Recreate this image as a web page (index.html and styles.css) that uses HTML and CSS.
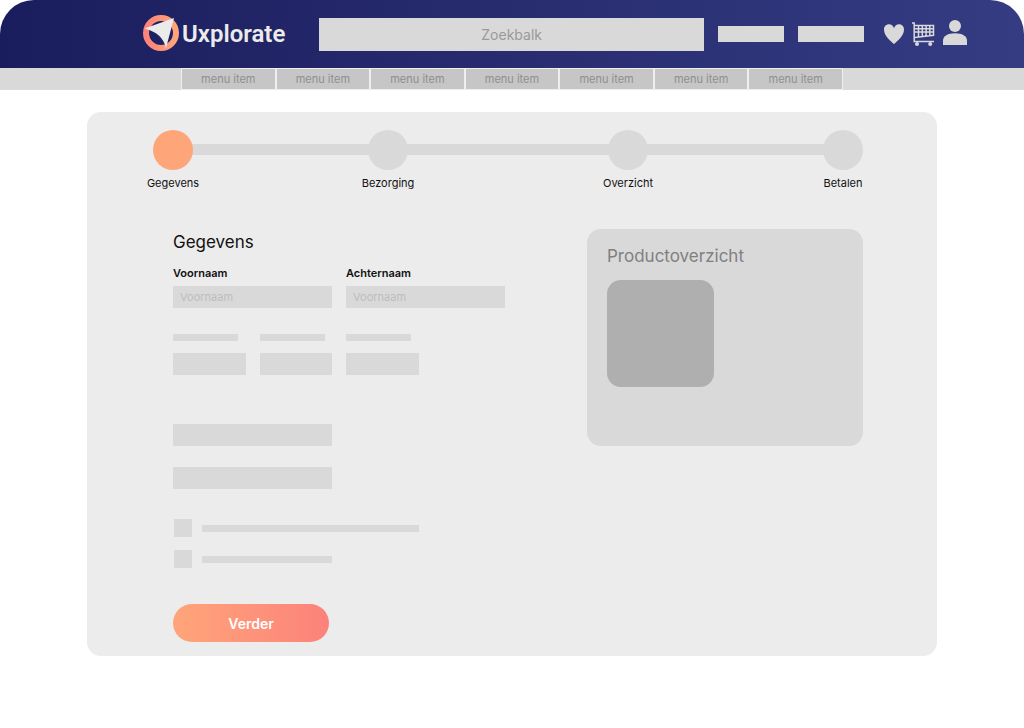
FILE: index.html
```
<!DOCTYPE html>
<html lang="nl">
<head>
    <meta charset="UTF-8">
    <meta name="viewport" content="width=device-width, initial-scale=1.0">
    <title>Uxplorate - Gegevens</title>
    <link rel="stylesheet" href="styles.css">
</head>
<body>
    <header class="header">
        <a href="#" class="logo">
            <svg class="logo-mark" viewBox="0 0 38 38" aria-hidden="true">
                <defs>
                    <linearGradient id="ring" x1="0" y1="0" x2="1" y2="0">
                        <stop offset="0" stop-color="#fd8379"/>
                        <stop offset="1" stop-color="#ffa57a"/>
                    </linearGradient>
                </defs>
                <circle cx="19" cy="18" r="15" fill="none" stroke="url(#ring)" stroke-width="6"/>
                <path d="M2.500 13.500L32 3L24 33Q20.500 18 2.500 13.500Z" fill="#ebebeb"/>
            </svg>
            <span class="logo-text">Uxplorate</span>
        </a>
        <input class="search" type="text" placeholder="Zoekbalk" aria-label="Zoekbalk">
        <nav class="header-links">
            <a href="#" aria-label="Link 1"></a>
            <a href="#" aria-label="Link 2"></a>
        </nav>
        <div class="header-icons">
            <a href="#" aria-label="Favorieten">
                <svg class="icon-heart" viewBox="0 0 20 20"><path d="M10 20C7 17.500 0 12 0 5.500C0 2.500 2.200 .3 5 .3C7.300 .3 9.200 1.800 10 4.200C10.800 1.800 12.700 .3 15 .3C17.800 .3 20 2.500 20 5.500C20 12 13 17.500 10 20Z"/></svg>
            </a>
            <a href="#" aria-label="Winkelwagen">
                <svg class="icon-cart" viewBox="0 0 23 24">
                    <path d="M0 1H2.200V19.500H22M2.200 3.500H21.500V13.300L2.500 15.500M2.200 6.700H21.500M2.200 10H21.500M6.500 3.500V15M10.300 3.500V14.500M14.100 3.500V14.200M17.800 3.500V13.800" fill="none" stroke="#d9d9d9" stroke-width="1.500"/>
                    <circle cx="5" cy="21.900" r="2"/>
                    <circle cx="18.200" cy="21.900" r="2"/>
                </svg>
            </a>
            <a href="#" aria-label="Account">
                <svg class="icon-user" viewBox="0 0 24 28"><circle cx="12" cy="6" r="6"/><path d="M0 25V20.500C0 16 5 13.200 12 13.200S24 16 24 20.500V25Z"/></svg>
            </a>
        </div>
    </header>

    <nav class="menu">
        <div class="menu-items">
            <a href="#">menu item</a>
            <a href="#">menu item</a>
            <a href="#">menu item</a>
            <a href="#">menu item</a>
            <a href="#">menu item</a>
            <a href="#">menu item</a>
            <a href="#">menu item</a>
        </div>
    </nav>

    <main class="card">
        <ol class="steps">
            <li class="step active"><span class="dot"></span><span>Gegevens</span></li>
            <li class="line" aria-hidden="true"></li>
            <li class="step"><span class="dot"></span><span>Bezorging</span></li>
            <li class="line" aria-hidden="true"></li>
            <li class="step"><span class="dot"></span><span>Overzicht</span></li>
            <li class="line" aria-hidden="true"></li>
            <li class="step"><span class="dot"></span><span>Betalen</span></li>
        </ol>

        <div class="content">
            <form>
                <h1>Gegevens</h1>
                <div class="fields">
                    <div class="field wide">
                        <label for="voornaam">Voornaam</label>
                        <input type="text" id="voornaam" placeholder="Voornaam">
                    </div>
                    <div class="field wide">
                        <label for="achternaam">Achternaam</label>
                        <input type="text" id="achternaam" placeholder="Voornaam">
                    </div>
                </div>
                <div class="fields short">
                    <div class="field">
                        <label class="bar" for="veld1"></label>
                        <input type="text" id="veld1">
                    </div>
                    <div class="field">
                        <label class="bar" for="veld2"></label>
                        <input type="text" id="veld2">
                    </div>
                    <div class="field">
                        <label class="bar" for="veld3"></label>
                        <input type="text" id="veld3">
                    </div>
                </div>
                <div class="fields contact">
                    <input type="text" aria-label="Veld 4">
                    <input type="text" aria-label="Veld 5">
                </div>
                <div class="checks">
                    <div class="check">
                        <input type="checkbox" id="optie1">
                        <label class="bar long" for="optie1"></label>
                    </div>
                    <div class="check">
                        <input type="checkbox" id="optie2">
                        <label class="bar medium" for="optie2"></label>
                    </div>
                </div>
                <button type="button" class="btn">Verder</button>
            </form>

            <aside class="overview">
                <h2>Productoverzicht</h2>
                <div class="product"></div>
            </aside>
        </div>
    </main>
</body>
</html>
```

FILE: styles.css
```
* {
    box-sizing: border-box;
}
body {
    margin: 0;
    background: #FFFFFF;
    color: #111111;
    font-family: Inter, sans-serif;
    font-size: 11px;
}
a {
    text-decoration: none;
}
input {
    border: none;
    border-radius: 0;
    background: #D9D9D9;
    font-family: inherit;
}

/* Header */
.header {
    display: flex;
    align-items: center;
    height: 68px;
    padding: 0 57px 0 142px;
    background: linear-gradient(90deg, #1A1D5D, #353C82);
    border-radius: 34px 34px 0 0;
}
.logo {
    display: flex;
    align-items: center;
    gap: 2px;
    margin-right: 34px;
}
.logo-mark {
    width: 38px;
    height: 38px;
}
.logo-text {
    color: #EBEBEB;
    font-family: Roboto, sans-serif;
    font-size: 24px;
    font-weight: 600;
}
.search {
    flex: 1;
    min-width: 0;
    height: 33px;
    padding: 0;
    font-size: 14px;
    text-align: center;
}
.search::placeholder {
    color: #999999;
}
.header-links {
    display: flex;
    gap: 14px;
    margin: 0 20px 0 14px;
}
.header-links a {
    width: 66px;
    height: 16px;
    background: #D9D9D9;
}
.header-icons {
    display: flex;
    align-items: center;
    gap: 8px;
}
.header-icons a {
    display: flex;
}
.header-icons svg {
    fill: #D9D9D9;
}
.icon-heart {
    width: 20px;
    height: 20px;
}
.icon-cart {
    width: 23px;
    height: 24px;
}
.icon-user {
    width: 24px;
    height: 28px;
}

/* Menu */
.menu {
    background: #D9D9D9;
}
.menu-items {
    display: grid;
    grid-template-columns: repeat(7, 1fr);
    max-width: 662px;
    margin: 0 auto;
}
.menu-items a {
    border: 1px solid #EFEFEF;
    background: #C6C6C6;
    color: #8F8F8F;
    line-height: 20px;
    text-align: center;
}

/* Checkout card */
.card {
    max-width: 850px;
    margin: 22px auto;
    padding: 18px 74px 14px 66px;
    background: #ECECEC;
    border-radius: 14px;
}
.steps {
    display: grid;
    grid-template-columns: 40px 7fr 40px 8fr 40px 7fr 40px;
    margin: 0;
    padding: 0;
    list-style: none;
}
.step {
    display: flex;
    flex-direction: column;
    align-items: center;
    gap: 5px;
    line-height: 16px;
}
.dot {
    position: relative;
    width: 40px;
    height: 40px;
    border-radius: 50%;
    background: #D9D9D9;
}
.step.active .dot {
    background: #FFA57A;
}
.line {
    height: 11px;
    margin: 14px -2px 0;
    background: #D9D9D9;
}
.content {
    display: grid;
    grid-template-columns: 332fr 276fr;
    gap: 82px;
    align-items: start;
    margin-top: 38px;
    padding-left: 20px;
}

/* Form */
h1, h2 {
    margin: 0;
    font-size: 17px;
    font-weight: 400;
    line-height: 26px;
}
h1 {
    margin-bottom: 10px;
}
.fields {
    display: grid;
    grid-template-columns: repeat(4, 1fr);
    gap: 14px;
}
.wide {
    grid-column: span 2;
}
.field {
    display: flex;
    flex-direction: column;
    gap: 5px;
    min-width: 0;
    font-weight: 600;
    line-height: 16px;
}
.fields input {
    width: 100%;
    height: 22px;
    padding: 0 7px;
    font-size: 11px;
}
.fields input::placeholder {
    color: #BDBDBD;
}
.bar {
    width: 65px;
    height: 7px;
    background: #D9D9D9;
}
.short {
    margin-top: 26px;
}
.short .field {
    gap: 12px;
}
.contact {
    grid-template-columns: repeat(2, 1fr);
    row-gap: 21px;
    margin-top: 49px;
}
.contact input {
    grid-column: 1;
}
.checks {
    display: flex;
    flex-direction: column;
    gap: 13px;
    margin: 30px 0 36px;
    padding-left: 1px;
}
.check {
    display: flex;
    align-items: center;
    gap: 10px;
}
.check input {
    appearance: none;
    width: 18px;
    height: 18px;
    margin: 0;
}
.check input:checked {
    background: #FFA57A;
}
.long {
    width: 217px;
}
.medium {
    width: 130px;
}
.btn {
    display: block;
    width: 156px;
    height: 38px;
    border: none;
    border-radius: 19px;
    background: linear-gradient(90deg, #FFA57A, #FC827A);
    color: #FFFFFF;
    font-family: inherit;
    font-size: 14px;
    font-weight: 600;
    cursor: pointer;
}

/* Product overview */
.overview {
    min-height: 217px;
    padding: 14px 20px;
    border-radius: 14px;
    background: #D9D9D9;
}
.overview h2 {
    color: #808080;
}
.product {
    width: 107px;
    height: 107px;
    margin-top: 11px;
    border-radius: 14px;
    background: #AFAFAF;
}

/* Responsiveness */
@media (max-width: 768px) {
    .header {
        padding: 0 20px;
    }
    .header-links {
        display: none;
    }
    .card {
        padding: 18px 30px;
    }
    .content {
        grid-template-columns: 1fr;
        gap: 30px;
        padding-left: 0;
    }
}
```
